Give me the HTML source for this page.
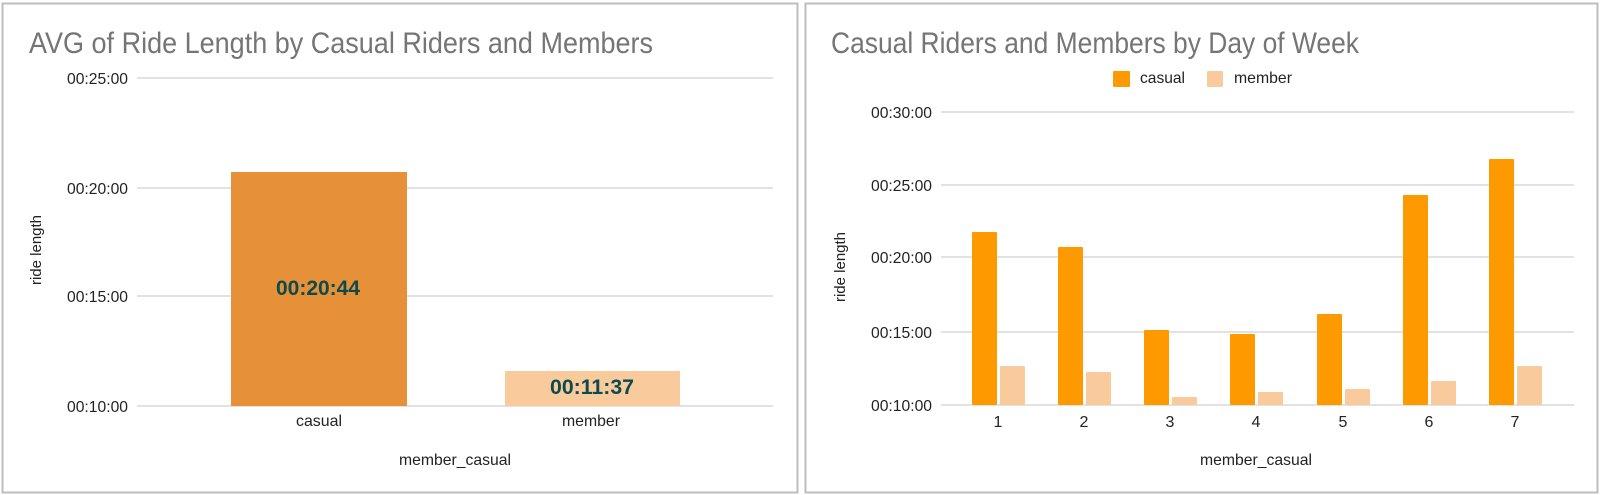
<!DOCTYPE html>
<html><head><meta charset="utf-8"><style>
html,body{margin:0;padding:0;background:#fff;}
svg{display:block;font-family:"Liberation Sans",Arial,sans-serif;}
</style></head><body>
<svg width="1600" height="495" viewBox="0 0 1600 495" xmlns="http://www.w3.org/2000/svg">
<rect x="0" y="0" width="1600" height="495" fill="#fff"/>
<rect x="2.5" y="3.5" width="795" height="489" fill="#fff" stroke="#bdbdbd" stroke-width="2"/>
<rect x="805.5" y="3.5" width="792" height="489" fill="#fff" stroke="#bdbdbd" stroke-width="2"/>

<text x="29" y="53" font-size="30" fill="#757575" textLength="624" lengthAdjust="spacingAndGlyphs">AVG of Ride Length by Casual Riders and Members</text>
<g stroke="#d9d9d9" stroke-width="1.5">
<line x1="137" x2="773" y1="78" y2="78"/>
<line x1="137" x2="773" y1="188" y2="188"/>
<line x1="137" x2="773" y1="296" y2="296"/>
<line x1="137" x2="773" y1="406" y2="406"/>
</g>
<g font-size="16" fill="#222" text-anchor="end">
<text x="128" y="84" textLength="61" lengthAdjust="spacingAndGlyphs">00:25:00</text>
<text x="128" y="194" textLength="61" lengthAdjust="spacingAndGlyphs">00:20:00</text>
<text x="128" y="302" textLength="61" lengthAdjust="spacingAndGlyphs">00:15:00</text>
<text x="128" y="412" textLength="61" lengthAdjust="spacingAndGlyphs">00:10:00</text>
</g>
<rect x="231" y="172" width="176" height="234" fill="#e69138"/>
<rect x="505" y="371" width="175" height="35" fill="#f9cb9c"/>
<text x="318" y="295" font-size="21" font-weight="bold" fill="#0c4a4f" text-anchor="middle" textLength="84" lengthAdjust="spacingAndGlyphs">00:20:44</text>
<text x="592" y="394" font-size="21" font-weight="bold" fill="#0c4a4f" text-anchor="middle" textLength="84" lengthAdjust="spacingAndGlyphs">00:11:37</text>
<g font-size="16" fill="#222" text-anchor="middle">
<text x="319" y="426" textLength="46" lengthAdjust="spacingAndGlyphs">casual</text>
<text x="591" y="426" textLength="58" lengthAdjust="spacingAndGlyphs">member</text>
<text x="455" y="465" textLength="112" lengthAdjust="spacingAndGlyphs">member_casual</text>
</g>
<text transform="translate(41,250) rotate(-90)" font-size="15" fill="#222" text-anchor="middle">ride length</text>

<text x="831" y="53" font-size="30" fill="#757575" textLength="528" lengthAdjust="spacingAndGlyphs">Casual Riders and Members by Day of Week</text>
<rect x="1113" y="71" width="17" height="16" rx="1" fill="#ff9900"/>
<text x="1140" y="83" font-size="16" fill="#222" textLength="45" lengthAdjust="spacingAndGlyphs">casual</text>
<rect x="1207" y="71" width="16" height="16" rx="1" fill="#f9cb9c"/>
<text x="1234" y="83" font-size="16" fill="#222" textLength="58" lengthAdjust="spacingAndGlyphs">member</text>
<g stroke="#d9d9d9" stroke-width="1.5">
<line x1="941" x2="1574" y1="112" y2="112"/>
<line x1="941" x2="1574" y1="185" y2="185"/>
<line x1="941" x2="1574" y1="257" y2="257"/>
<line x1="941" x2="1574" y1="332" y2="332"/>
<line x1="941" x2="1574" y1="405" y2="405"/>
</g>
<g font-size="16" fill="#222" text-anchor="end">
<text x="932" y="118" textLength="61" lengthAdjust="spacingAndGlyphs">00:30:00</text>
<text x="932" y="191" textLength="61" lengthAdjust="spacingAndGlyphs">00:25:00</text>
<text x="932" y="263" textLength="61" lengthAdjust="spacingAndGlyphs">00:20:00</text>
<text x="932" y="338" textLength="61" lengthAdjust="spacingAndGlyphs">00:15:00</text>
<text x="932" y="411" textLength="61" lengthAdjust="spacingAndGlyphs">00:10:00</text>
</g>
<g fill="#ff9900">
<rect x="972" y="232" width="25" height="173" rx="1"/>
<rect x="1058" y="247" width="25" height="158" rx="1"/>
<rect x="1144" y="330" width="25" height="75" rx="1"/>
<rect x="1230" y="334" width="25" height="71" rx="1"/>
<rect x="1317" y="314" width="25" height="91" rx="1"/>
<rect x="1403" y="195" width="25" height="210" rx="1"/>
<rect x="1489" y="159" width="25" height="246" rx="1"/>
</g>
<g fill="#f9cb9c">
<rect x="1000" y="366" width="25" height="39" rx="1"/>
<rect x="1086" y="372" width="25" height="33" rx="1"/>
<rect x="1172" y="397" width="25" height="8" rx="1"/>
<rect x="1258" y="392" width="25" height="13" rx="1"/>
<rect x="1345" y="389" width="25" height="16" rx="1"/>
<rect x="1431" y="381" width="25" height="24" rx="1"/>
<rect x="1517" y="366" width="25" height="39" rx="1"/>
</g>
<g font-size="16" fill="#222" text-anchor="middle">
<text x="998" y="427">1</text>
<text x="1084" y="427">2</text>
<text x="1170" y="427">3</text>
<text x="1256" y="427">4</text>
<text x="1343" y="427">5</text>
<text x="1429" y="427">6</text>
<text x="1515" y="427">7</text>
<text x="1256" y="465" textLength="112" lengthAdjust="spacingAndGlyphs">member_casual</text>
</g>
<text transform="translate(845,267) rotate(-90)" font-size="15" fill="#222" text-anchor="middle">ride length</text>
</svg>
</body></html>
